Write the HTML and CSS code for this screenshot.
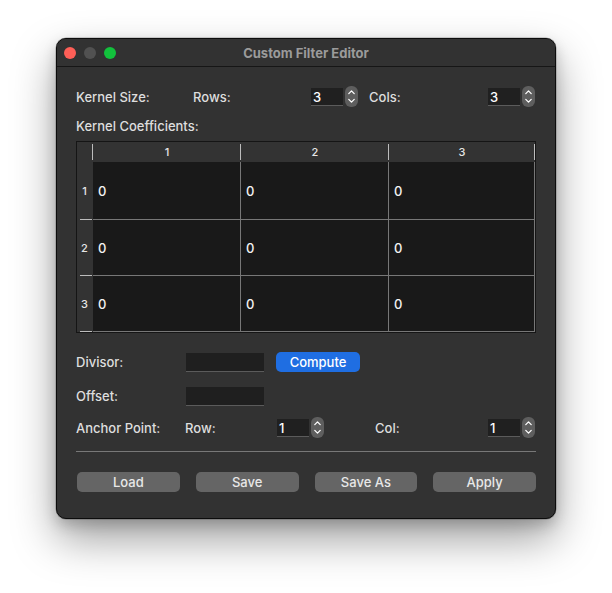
FILE: index.html
```html
<!DOCTYPE html>
<html>
<head>
<meta charset="utf-8">
<link rel="stylesheet" href="styles.css">
</head>
<body>
<div class="stage">
  <div class="window">
    <div class="titlebar">
      <div class="lights">
        <span class="light red"></span>
        <span class="light gray"></span>
        <span class="light green"></span>
      </div>
      <div class="title">Custom Filter Editor</div>
    </div>
    <div class="content">
      <div class="row size-row">
        <span class="label">Kernel Size:</span>
        <span class="label">Rows:</span>
        <div class="spin"><span class="spin-input">3</span><span class="stepper"><svg width="13" height="21" viewBox="0 0 13 21"><path d="M3.8 7.6 L6.5 4.9 L9.2 7.6" fill="none" stroke="#fff" stroke-width="1.3" stroke-linecap="round" stroke-linejoin="round"/><path d="M3.8 13.4 L6.5 16.1 L9.2 13.4" fill="none" stroke="#fff" stroke-width="1.3" stroke-linecap="round" stroke-linejoin="round"/></svg></span></div>
        <span></span>
        <span class="label">Cols:</span>
        <div class="spin"><span class="spin-input">3</span><span class="stepper"><svg width="13" height="21" viewBox="0 0 13 21"><path d="M3.8 7.6 L6.5 4.9 L9.2 7.6" fill="none" stroke="#fff" stroke-width="1.3" stroke-linecap="round" stroke-linejoin="round"/><path d="M3.8 13.4 L6.5 16.1 L9.2 13.4" fill="none" stroke="#fff" stroke-width="1.3" stroke-linecap="round" stroke-linejoin="round"/></svg></span></div>
      </div>

      <div class="section-label">Kernel Coefficients:</div>

      <div class="table">
        <div class="hcorner"></div>
        <div class="hcell">1</div>
        <div class="hcell">2</div>
        <div class="hcell">3</div>

        <div class="rhead first">1</div>
        <div class="cell first">0</div>
        <div class="cell first">0</div>
        <div class="cell first">0</div>

        <div class="rhead">2</div>
        <div class="cell">0</div>
        <div class="cell">0</div>
        <div class="cell">0</div>

        <div class="rhead">3</div>
        <div class="cell">0</div>
        <div class="cell">0</div>
        <div class="cell">0</div>
      </div>

      <div class="row field-row divisor">
        <span class="label">Divisor:</span>
        <span class="text-input"></span>
        <button class="primary">Compute</button>
      </div>

      <div class="row field-row offset">
        <span class="label">Offset:</span>
        <span class="text-input"></span>
      </div>

      <div class="row anchor-row">
        <span class="label">Anchor Point:</span>
        <span class="label">Row:</span>
        <div class="spin"><span class="spin-input">1</span><span class="stepper"><svg width="13" height="21" viewBox="0 0 13 21"><path d="M3.8 7.6 L6.5 4.9 L9.2 7.6" fill="none" stroke="#fff" stroke-width="1.3" stroke-linecap="round" stroke-linejoin="round"/><path d="M3.8 13.4 L6.5 16.1 L9.2 13.4" fill="none" stroke="#fff" stroke-width="1.3" stroke-linecap="round" stroke-linejoin="round"/></svg></span></div>
        <span></span>
        <span class="label">Col:</span>
        <div class="spin"><span class="spin-input">1</span><span class="stepper"><svg width="13" height="21" viewBox="0 0 13 21"><path d="M3.8 7.6 L6.5 4.9 L9.2 7.6" fill="none" stroke="#fff" stroke-width="1.3" stroke-linecap="round" stroke-linejoin="round"/><path d="M3.8 13.4 L6.5 16.1 L9.2 13.4" fill="none" stroke="#fff" stroke-width="1.3" stroke-linecap="round" stroke-linejoin="round"/></svg></span></div>
      </div>

      <div class="separator"></div>

      <div class="buttons">
        <button class="btn">Load</button>
        <button class="btn">Save</button>
        <button class="btn">Save As</button>
        <button class="btn">Apply</button>
      </div>
    </div>
  </div>
</div>
</body>
</html>
```

FILE: styles.css
```css
html, body {
  margin: 0;
  padding: 0;
  background: #ffffff;
}

body {
  font-family: Inter, "Noto Sans", "Liberation Sans", sans-serif;
  font-size: 13px;
  font-weight: 500;
  color: #dedede;
}

.stage {
  padding: 38px 0 0 56px;
  width: 612px;
  height: 593px;
  box-sizing: border-box;
}

.window {
  width: 500px;
  height: 481px;
  box-sizing: border-box;
  background: #323232;
  border: 1px solid #0c0c0c;
  border-radius: 10px;
  box-shadow: 0 0 0 0.5px rgba(0,0,0,0.3), 0 20px 44px rgba(0,0,0,0.38), 0 6px 14px rgba(0,0,0,0.18);
  overflow: hidden;
}

.titlebar {
  height: 28px;
  box-sizing: border-box;
  border-bottom: 1px solid #161616;
  display: grid;
  grid-template-columns: 1fr;
  align-items: center;
  background: #323232;
}

.lights {
  grid-area: 1 / 1;
  display: flex;
  gap: 8px;
  padding-left: 7px;
  align-items: center;
}

.light {
  width: 12px;
  height: 12px;
  border-radius: 50%;
  display: block;
}

.light.red { background: #fe5f57; }
.light.gray { background: #515151; }
.light.green { background: #12c13c; }

.title {
  grid-area: 1 / 1;
  text-align: center;
  font-weight: 700;
  font-size: 13px;
  color: #9b9b9b;
}

.content {
  padding: 0 19px;
}

.row {
  display: grid;
  align-items: center;
}

.label {
  color: #dedede;
  white-space: nowrap;
}

.size-row {
  margin-top: 19px;
  height: 21px;
  grid-template-columns: 117px 118px 47px 11px 119px 48px;
}

.spin {
  display: flex;
  align-items: center;
  gap: 2px;
}

.spin-input {
  width: 32px;
  height: 18px;
  box-sizing: border-box;
  background: #202020;
  border-bottom: 1px solid #5b5b5b;
  color: #ffffff;
  font-size: 13px;
  line-height: 18px;
  padding-left: 2px;
}

.stepper {
  width: 13px;
  height: 21px;
  border-radius: 6px;
  background: #5e5e5e;
  display: block;
}

.stepper svg { display: block; }

.section-label {
  margin-top: 11px;
  height: 16px;
  line-height: 16px;
  color: #dedede;
}

.table {
  margin-top: 7px;
  width: 460px;
  box-sizing: border-box;
  border: 1px solid #151515;
  display: grid;
  grid-template-columns: 16px 148px 148px 146px;
  grid-template-rows: 20px 58px 56px 56px;
}

.hcorner {
  background: linear-gradient(#bdbdbd, #bdbdbd) right 2px / 1px 16px no-repeat, #333333;
}

.hcell {
  background: linear-gradient(#bdbdbd, #bdbdbd) right 2px / 1px 16px no-repeat, #333333;
  display: flex;
  align-items: center;
  justify-content: center;
  font-size: 11px;
  color: #e6e6e6;
}

.rhead {
  background: linear-gradient(#bdbdbd, #bdbdbd) right 1px bottom / 12px 1px no-repeat, #333333;
  display: flex;
  align-items: center;
  justify-content: center;
  font-size: 11px;
  color: #e6e6e6;
  padding-right: 1px;
}

.cell {
  background: #191919;
  border-right: 1px solid #777777;
  border-bottom: 1px solid #777777;
  display: flex;
  align-items: center;
  padding-left: 5px;
  color: #f2f2f2;
  font-size: 13px;
}

.field-row {
  grid-template-columns: 110px 78px auto;
  justify-content: start;
  column-gap: 0;
}

.divisor {
  margin-top: 19px;
  height: 20px;
}

.offset {
  margin-top: 14px;
  height: 20px;
}

.text-input {
  width: 78px;
  height: 19px;
  box-sizing: border-box;
  background: #1f1f1f;
  border-bottom: 1px solid #5b5b5b;
  display: block;
}

.primary {
  margin-left: 12px;
  width: 84px;
  height: 20px;
  border: none;
  border-radius: 5px;
  background: #1f6ee2;
  color: #ffffff;
  font-family: inherit;
  font-weight: 500;
  font-size: 13px;
  padding: 0;
}

.anchor-row {
  margin-top: 11px;
  height: 21px;
  grid-template-columns: 109px 92px 47px 51px 113px 48px;
}

.separator {
  margin-top: 13px;
  height: 1px;
  background: #787878;
}

.buttons {
  margin-top: 20px;
  padding-left: 1px;
  display: grid;
  grid-template-columns: repeat(4, 1fr);
  column-gap: 16px;
}

.btn {
  height: 20px;
  border: none;
  border-radius: 5px;
  background: #656565;
  color: #e8e8e8;
  font-family: inherit;
  font-weight: 500;
  font-size: 13px;
  padding: 0;
}
```
